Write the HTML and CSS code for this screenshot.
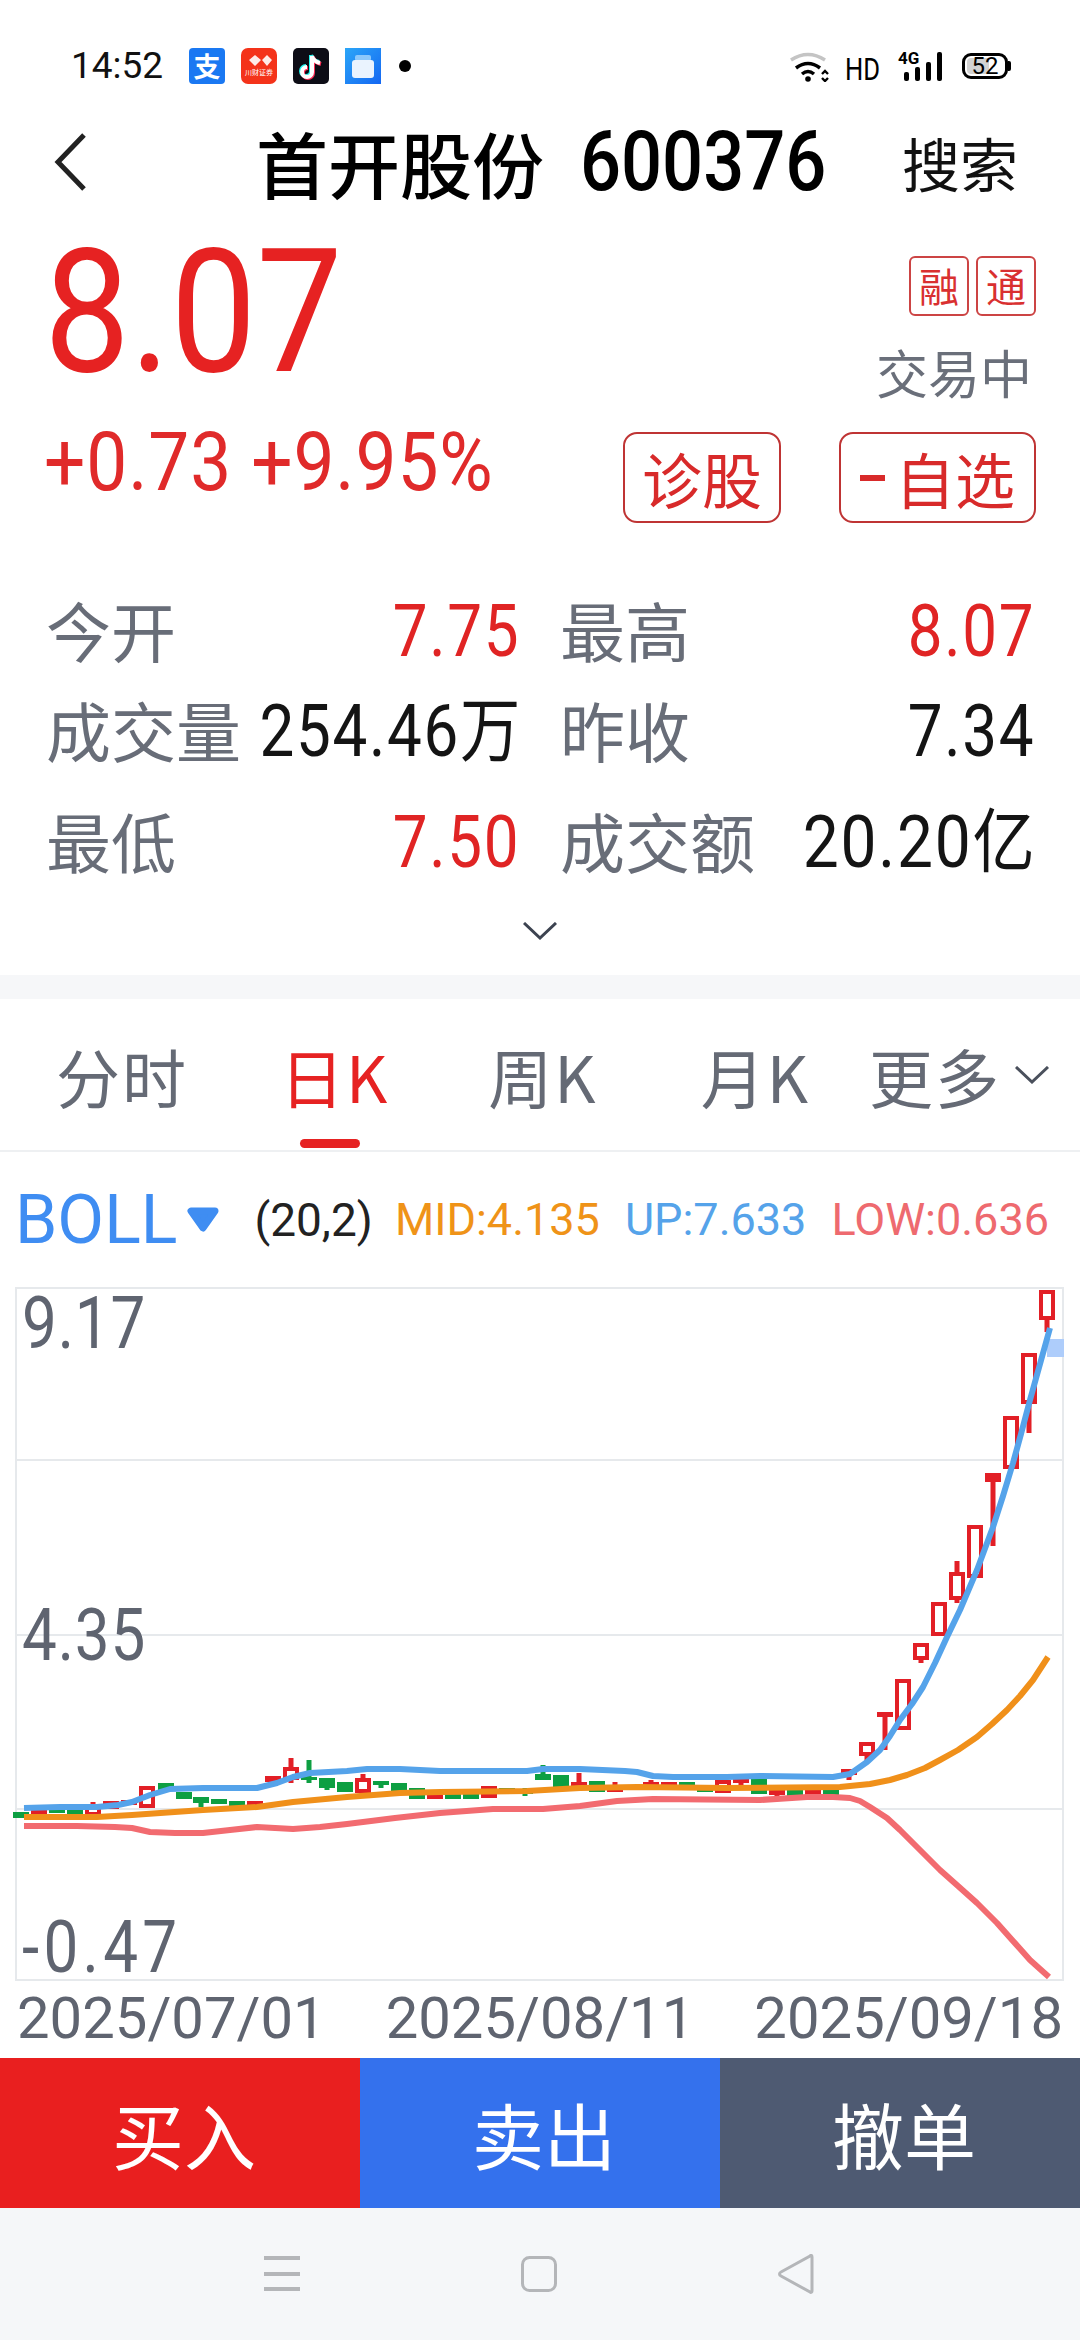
FILE: index.html
```html
<!doctype html>
<html lang="zh-CN">
  <head>
    <meta charset="UTF-8">
    <meta name="viewport" content="width=device-width, initial-scale=1.0">
    <title>首开股份 600376</title>
    <link rel="stylesheet" href="styles.css">
  </head>
  <body>
    <div class="status-bar">
      <span class="clock">14:52</span>
      <span class="app-icon alipay">支</span>
      <svg class="app-icon" viewBox="0 0 36 36">
        <rect width="36" height="36" rx="7" fill="#f4331a"/>
        <path d="M8 12l6-5 6 5-6 6zM21 12l5-5 5 5-5 6z" fill="#fff" opacity=".9"/>
        <text x="18" y="27" font-size="7" fill="#fff" text-anchor="middle" font-family="Noto Sans CJK SC">川财证券</text>
      </svg>
      <svg class="app-icon" viewBox="0 0 36 36">
        <rect width="36" height="36" rx="5" fill="#0d0d16"/>
        <g fill="none" stroke-width="4">
          <path d="M18 7v16a5 5 0 1 1-5-5M18 7c1 4 4 6 8 7" stroke="#25f4ee"/>
          <path d="M20 9v16a5 5 0 1 1-5-5M20 9c1 4 4 6 8 7" stroke="#fe2c55"/>
          <path d="M19 8v16a5 5 0 1 1-5-5M19 8c1 4 4 6 8 7" stroke="#fff"/>
        </g>
      </svg>
      <svg class="app-icon" viewBox="0 0 36 36">
        <defs>
          <linearGradient id="cardBg" x1="0" y1="0" x2="1" y2="1">
            <stop offset="0" stop-color="#2ba6f8"/>
            <stop offset="1" stop-color="#1467f2"/>
          </linearGradient>
        </defs>
        <rect width="36" height="36" fill="url(#cardBg)"/>
        <rect x="10" y="7" width="16" height="6" rx="2" fill="#8cc8fb"/>
        <rect x="7" y="12" width="22" height="18" rx="3" fill="#eaf3fe"/>
      </svg>
      <span class="dot"></span>
      <span class="status-right">
        <svg class="wifi" viewBox="0 0 40 30" fill="none">
          <path d="M1 8Q18-3 35 8" stroke="#c4c4c4" stroke-width="3.5"/>
          <path d="M6 16Q18 7 30 16" stroke="#000" stroke-width="3.5"/>
          <path d="M12 22Q18 17 24 22" stroke="#000" stroke-width="3.5"/>
          <circle cx="18" cy="27" r="2.8" fill="#000"/>
          <path d="M32 22l3-3 3 3M32 26l3 3 3-3" stroke="#000" stroke-width="2.4"/>
        </svg>
        <span class="hd">HD</span>
        <span class="signal">
          <span class="four-g">4G</span>
          <svg viewBox="0 0 38 29" width="38" height="29">
            <rect x="0" y="20" width="5" height="9" rx="2"/>
            <rect x="11" y="15" width="5" height="14" rx="2"/>
            <rect x="22" y="10" width="5" height="19" rx="2"/>
            <rect x="33" y="0" width="5" height="29" rx="2"/>
          </svg>
        </span>
        <span class="battery"><span class="battery-level"></span><span class="battery-num">52</span></span>
      </span>
    </div>

    <div class="title-bar">
      <svg class="back" viewBox="0 0 32 58" fill="none"><path d="M30 2L4 29l26 27" stroke="#222" stroke-width="5"/></svg>
      <div class="title"><span class="name">首开股份</span><span class="code">600376</span></div>
      <span class="search">搜索</span>
    </div>

    <div class="quote">
      <div class="quote-left">
        <div class="price">8.07</div>
        <div class="change">+0.73 +9.95%</div>
      </div>
      <div class="quote-right">
        <div class="tags"><span class="tag">融</span><span class="tag">通</span></div>
        <div class="trade-state">交易中</div>
        <div class="actions">
          <span class="btn btn-diag">诊股</span>
          <span class="btn btn-fav"><i class="minus"></i>自选</span>
        </div>
      </div>
    </div>

    <div class="stats">
      <div class="stat"><span class="k">今开</span><span class="v up">7.75</span></div>
      <div class="stat"><span class="k">最高</span><span class="v up">8.07</span></div>
      <div class="stat"><span class="k">成交量</span><span class="v">254.46<small>万</small></span></div>
      <div class="stat"><span class="k">昨收</span><span class="v">7.34</span></div>
      <div class="stat"><span class="k">最低</span><span class="v up">7.50</span></div>
      <div class="stat"><span class="k">成交额</span><span class="v amount">20.20<small>亿</small></span></div>
    </div>
    <div class="expand">
      <svg viewBox="0 0 34 18" width="34" height="18" fill="none"><path d="M1 1l16 15L33 1" stroke="#3c4350" stroke-width="3"/></svg>
    </div>
    <div class="band"></div>

    <div class="tabs">
      <span class="tab">分时</span>
      <span class="tab active">日K</span>
      <span class="tab week">周K</span>
      <span class="tab month">月K</span>
      <span class="tab more">更多<svg viewBox="0 0 34 18" width="34" height="18" fill="none"><path d="M1 1l16 15L33 1" stroke="#4a505c" stroke-width="3"/></svg></span>
    </div>

    <div class="indicator">
      <span class="boll">BOLL</span>
      <svg class="boll-arrow" viewBox="0 0 32 25"><path d="M4 4H28L16 21z" fill="#3f8df2" stroke="#3f8df2" stroke-width="7" stroke-linejoin="round"/></svg>
      <span class="param">(20,2)</span>
      <span class="mid">MID:4.135</span>
      <span class="upper">UP:7.633</span>
      <span class="lower">LOW:0.636</span>
    </div>

    <div class="chart">
      <svg class="plot" viewBox="0 1287 1080 696">
        <path class="grid" d="M16 1287V1981M1063 1287V1981M16 1288H1063M16 1460H1063M16 1635H1063M16 1809H1063M16 1980H1063"/>
        <rect x="1047" y="1339" width="17" height="18" fill="#aecdfb"/>

        <path class="wick-g" d="M201 1797V1807M309 1760V1783M327 1778V1790M381 1781V1788M525 1788V1796M543 1765V1780"/>
        <path class="wick-r" d="M93 1802V1816M291 1758V1783M363 1774V1791M579 1773V1786M615 1782V1792M651 1780V1788M741 1779V1785M777 1790V1798M849 1769V1780M867 1754V1761M885 1712V1750M921 1658V1663M957 1561V1603M993 1473V1546M1029 1402V1433M1047 1318V1332"/>

        <g class="fall">
          <rect x="13" y="1812" width="16" height="6"/><rect x="49" y="1808" width="16" height="5"/><rect x="67" y="1808" width="16" height="6"/>
          <rect x="158" y="1783" width="16" height="8"/><rect x="176" y="1792" width="16" height="7"/><rect x="193" y="1797" width="16" height="6"/>
          <rect x="211" y="1799" width="16" height="5"/><rect x="229" y="1801" width="16" height="6"/><rect x="301" y="1777" width="16" height="3"/>
          <rect x="319" y="1778" width="16" height="10"/><rect x="337" y="1782" width="16" height="10"/><rect x="373" y="1781" width="16" height="4"/>
          <rect x="391" y="1783" width="16" height="9"/><rect x="409" y="1788" width="16" height="11"/><rect x="445" y="1793" width="16" height="6"/>
          <rect x="463" y="1793" width="16" height="6"/><rect x="499" y="1788" width="16" height="5"/><rect x="517" y="1792" width="16" height="2"/>
          <rect x="535" y="1774" width="16" height="6"/><rect x="553" y="1775" width="16" height="12"/><rect x="589" y="1781" width="16" height="11"/>
          <rect x="679" y="1782" width="16" height="6"/><rect x="697" y="1785" width="16" height="7"/><rect x="751" y="1779" width="16" height="15"/>
          <rect x="787" y="1790" width="16" height="6"/><rect x="823" y="1789" width="16" height="6"/>
        </g>
        <g class="rise">
          <rect x="31" y="1808" width="16" height="7"/><rect x="103" y="1801" width="16" height="8"/><rect x="121" y="1800" width="16" height="5"/>
          <rect x="247" y="1801" width="16" height="5"/><rect x="265" y="1776" width="16" height="6"/><rect x="427" y="1794" width="16" height="5"/>
          <rect x="481" y="1786" width="16" height="12"/><rect x="571" y="1782" width="16" height="4"/><rect x="607" y="1788" width="16" height="4"/>
          <rect x="625" y="1785" width="16" height="3"/><rect x="643" y="1782" width="16" height="6"/><rect x="661" y="1782" width="16" height="6"/>
          <rect x="733" y="1779" width="16" height="4"/><rect x="769" y="1790" width="16" height="5"/><rect x="805" y="1789" width="16" height="6"/>
          <rect x="841" y="1769" width="16" height="6"/><rect x="877" y="1712" width="16" height="5"/><rect x="985" y="1473" width="16" height="9"/>
        </g>
        <g class="hollow">
          <rect x="87" y="1807" width="12" height="7"/><rect x="141" y="1788" width="12" height="18"/><rect x="285" y="1769" width="12" height="9"/>
          <rect x="357" y="1780" width="12" height="11"/><rect x="717" y="1782" width="12" height="9"/><rect x="861" y="1744" width="12" height="10"/>
          <rect x="897" y="1681" width="12" height="47"/><rect x="915" y="1645" width="12" height="13"/><rect x="933" y="1604" width="12" height="30"/>
          <rect x="951" y="1574" width="12" height="24"/><rect x="969" y="1527" width="12" height="49"/><rect x="1005" y="1418" width="12" height="49"/>
          <rect x="1023" y="1355" width="12" height="47"/><rect x="1041" y="1292" width="12" height="26"/>
        </g>

        <polyline class="line low" points="24,1826 77,1826 115,1827 132,1828 150,1832 175,1833 203,1833 230,1830 257,1827 275,1828 293,1829 320,1827 347,1824 395,1818 440,1813 493,1809 543,1809 580,1806 617,1801 653,1799 760,1800 807,1797 833,1797 850,1798 860,1801 870,1807 887,1818 900,1830 913,1843 940,1870 958,1886 977,1903 997,1923 1013,1941 1030,1960 1040,1969 1049,1977"/>
        <polyline class="line top" points="24,1808 60,1807 97,1807 118,1805 132,1802 150,1795 170,1789 203,1788 257,1788 277,1783 293,1777 310,1773 347,1771 367,1769 400,1769 440,1771 527,1771 543,1769 580,1769 625,1771 637,1772 653,1776 673,1777 727,1777 760,1776 833,1777 850,1774 867,1762 880,1750 890,1736 900,1720 912,1704 923,1687 935,1663 947,1637 960,1610 977,1570 993,1527 1003,1496 1013,1463 1021,1434 1030,1400 1040,1364 1050,1328"/>
        <polyline class="line avg" points="24,1817 97,1817 132,1815 203,1810 257,1807 293,1802 347,1797 400,1793 440,1792 527,1791 580,1788 637,1787 727,1788 840,1787 870,1784 890,1780 907,1775 925,1768 940,1760 958,1750 977,1737 992,1724 1007,1710 1020,1696 1033,1680 1048,1657"/>
      </svg>
      <div class="axis">
        <span>9.17</span>
        <span>4.35</span>
        <span class="neg">-0.47</span>
      </div>
    </div>

    <div class="dates">
      <span>2025/07/01</span>
      <span>2025/08/11</span>
      <span>2025/09/18</span>
    </div>

    <div class="trade">
      <span class="trade-btn buy">买入</span>
      <span class="trade-btn sell">卖出</span>
      <span class="trade-btn cancel">撤单</span>
    </div>

    <div class="nav-bar">
      <svg viewBox="0 0 36 36" width="36" height="36"><path d="M0 2H36M0 18H36M0 33H36" stroke="#b4b6b9" stroke-width="4"/></svg>
      <svg viewBox="0 0 36 36" width="36" height="36" fill="none"><rect x="1.5" y="1.5" width="33" height="33" rx="7" stroke="#b4b6b9" stroke-width="3"/></svg>
      <svg viewBox="0 0 36 40" width="36" height="40" fill="none"><path d="M34 3c0-2-1-2-2-1L3 18c-2 1-2 3 0 4l29 16c1 1 2 0 2-1z" stroke="#b4b6b9" stroke-width="3"/></svg>
    </div>
  </body>
</html>
```

FILE: styles.css
```css
* {
  box-sizing: border-box;
}

body {
  margin: 0;
  width: 1080px;
  height: 2340px;
  background: #fff;
  font-family: Roboto, 'Noto Sans CJK SC', sans-serif;
  color: #111;
  overflow: hidden;
  white-space: nowrap;
}

/* status bar */
.status-bar {
  height: 106px;
  padding: 48px 72px 0 71px;
  display: flex;
  align-items: flex-start;
}
.clock {
  font-size: 37px;
  line-height: 36px;
  width: 118px;
  color: #111;
}
.app-icon {
  width: 36px;
  height: 36px;
  margin-right: 16px;
  display: block;
}
.alipay {
  background: #1a78f2;
  border-radius: 4px;
  color: #fff;
  font-family: 'Noto Sans CJK SC', sans-serif;
  font-weight: 700;
  font-size: 27px;
  line-height: 36px;
  text-align: center;
}
.dot {
  width: 12px;
  height: 12px;
  margin: 12px 0 0 2px;
  background: #000;
  border-radius: 50%;
}
.status-right {
  margin-left: auto;
  display: flex;
  align-items: flex-start;
}
.wifi {
  width: 40px;
  height: 30px;
  margin-top: 4px;
}
.hd {
  width: 35px;
  font-size: 32px;
  line-height: 36px;
  margin: 3px 0 0 15px;
  color: #000;
  transform: scaleX(.8);
  transform-origin: left;
}
.signal {
  position: relative;
  display: block;
  width: 38px;
  height: 29px;
  margin: 4px 0 0 24px;
}
.signal svg {
  display: block;
}
.four-g {
  position: absolute;
  left: -6px;
  top: -2px;
  font-size: 17px;
  line-height: 16px;
  font-weight: 700;
  color: #000;
}
.battery {
  position: relative;
  width: 46px;
  height: 26px;
  margin: 5px 0 0 20px;
  border: 3px solid #000;
  border-radius: 9px;
  text-align: center;
}
.battery::after {
  content: '';
  position: absolute;
  right: -6px;
  top: 5px;
  width: 3px;
  height: 10px;
  background: #000;
  border-radius: 0 2px 2px 0;
}
.battery-level {
  position: absolute;
  left: 2px;
  top: 2px;
  bottom: 2px;
  width: 22px;
  background: #d2d2d2;
  border-radius: 4px 0 0 4px;
}
.battery-num {
  position: relative;
  display: block;
  font-size: 24px;
  line-height: 20px;
  color: #000;
}

/* title */
.title-bar {
  height: 112px;
  display: flex;
  align-items: center;
  padding: 0 62px 0 54px;
}
.back {
  width: 32px;
  height: 58px;
}
.title {
  margin-left: 170px;
  display: flex;
  align-items: center;
}
.name {
  font-family: 'Noto Sans CJK SC', sans-serif;
  font-size: 72px;
  font-weight: 500;
  line-height: 112px;
  color: #000;
}
.code {
  width: 239px;
  margin-left: 36px;
  font-size: 84px;
  font-weight: 500;
  line-height: 112px;
  color: #000;
  transform: scaleX(.86);
  transform-origin: left;
}
.search {
  margin-left: auto;
  font-family: 'Noto Sans CJK SC', sans-serif;
  font-size: 58px;
  line-height: 112px;
}

/* quote */
.quote {
  height: 364px;
  padding: 0 44px 0 44px;
  display: flex;
  justify-content: space-between;
}
.price {
  font-size: 173px;
  line-height: 172px;
  margin-top: 8px;
  color: #e62222;
  transform: scaleX(.885);
  transform-origin: left;
}
.change {
  font-size: 82px;
  line-height: 80px;
  margin-top: 24px;
  color: #e02a2a;
  letter-spacing: 1px;
  transform: scaleX(.89);
  transform-origin: left;
}
.quote-right {
  display: flex;
  flex-direction: column;
  align-items: flex-end;
}
.tags {
  display: flex;
  gap: 7px;
  margin-top: 38px;
}
.tag {
  width: 60px;
  height: 60px;
  border: 2px solid #cc4444;
  border-radius: 6px;
  color: #d93030;
  font-family: 'Noto Sans CJK SC', sans-serif;
  font-size: 40px;
  line-height: 54px;
  text-align: center;
}
.trade-state {
  font-family: 'Noto Sans CJK SC', sans-serif;
  font-size: 52px;
  line-height: 60px;
  margin: 26px 4px 0 0;
  color: #6a6f7a;
}
.actions {
  display: flex;
  gap: 58px;
  margin-top: 30px;
}
.btn {
  height: 91px;
  border: 2px solid #bf3434;
  border-radius: 14px;
  color: #d82a2a;
  font-family: 'Noto Sans CJK SC', sans-serif;
  font-size: 60px;
  line-height: 84px;
  text-align: center;
  display: flex;
  align-items: center;
  justify-content: center;
}
.btn-diag {
  width: 158px;
}
.btn-fav {
  width: 197px;
}
.minus {
  width: 25px;
  height: 6px;
  margin-right: 10px;
  background: #d82a2a;
}

/* stats */
.stats {
  padding: 0 45px 0 46px;
  display: grid;
  grid-template-columns: 474px 475px;
  grid-template-rows: 100px 100px 122px;
  column-gap: 40px;
}
.stat {
  display: flex;
  justify-content: space-between;
  align-items: center;
}
.k {
  flex: none;
  margin: 0 -60px 6px 0;
  font-family: 'Noto Sans CJK SC', sans-serif;
  font-size: 65px;
  color: #686d78;
}
.v {
  font-size: 72px;
  line-height: 84px;
  letter-spacing: 2px;
  color: #141414;
  transform: scaleX(.86);
  transform-origin: right;
}
.v small {
  font-family: 'Noto Sans CJK SC', sans-serif;
  font-size: 70px;
  line-height: 0;
  letter-spacing: 0;
}
.v.up {
  color: #e02424;
}
.v.amount {
  transform: scaleX(.89);
}
.expand {
  height: 71px;
  padding-top: 18px;
  display: flex;
  justify-content: center;
  align-items: flex-start;
}
.band {
  height: 24px;
  background: #f6f7f9;
}

/* tabs */
.tabs {
  height: 153px;
  border-bottom: 2px solid #eef0f2;
  padding: 0 32px 0 56px;
  display: flex;
  gap: 94px;
}
.tab {
  position: relative;
  font-family: 'Noto Sans CJK SC', sans-serif;
  font-size: 64px;
  letter-spacing: 2px;
  line-height: 152px;
  color: #656a75;
}
.tab.active {
  margin-left: -2px;
  color: #e62222;
}
.tab.active::after {
  content: '';
  position: absolute;
  left: 20px;
  bottom: 2px;
  width: 60px;
  height: 9px;
  background: #e62222;
  border-radius: 5px;
}
.tab.week {
  margin-left: 5px;
}
.tab.month {
  margin-left: 9px;
}
.tab.more {
  margin-left: -35px;
  display: flex;
  align-items: center;
  gap: 14px;
}

/* indicator */
.indicator {
  height: 135px;
  padding: 0 31px 0 15px;
  display: flex;
  align-items: center;
  font-size: 45px;
}
.boll {
  font-size: 68px;
  color: #3f8df2;
}
.boll-arrow {
  width: 32px;
  height: 25px;
  margin: 0 35px 0 10px;
}
.param {
  font-size: 46px;
  color: #222;
}
.mid {
  margin-left: auto;
  color: #ef9318;
}
.upper {
  margin-left: 25px;
  color: #55a3ea;
}
.lower {
  margin-left: 25px;
  color: #ee6a6f;
}

/* chart */
.chart {
  position: relative;
  height: 696px;
}
.plot {
  display: block;
  width: 1080px;
  height: 696px;
}
.grid {
  fill: none;
  stroke: #e6e9ec;
  stroke-width: 2;
}
.wick-g {
  fill: none;
  stroke: #0d9f42;
  stroke-width: 5;
}
.wick-r {
  fill: none;
  stroke: #e21f26;
  stroke-width: 5;
}
.fall {
  fill: #0d9f42;
}
.rise {
  fill: #e21f26;
}
.hollow {
  fill: #fff;
  stroke: #e21f26;
  stroke-width: 4;
}
.line {
  fill: none;
  stroke-width: 6;
  stroke-linejoin: round;
}
.line.top {
  stroke: #55a3ea;
}
.line.avg {
  stroke: #f0901a;
}
.line.low {
  stroke: #f26b70;
}
.axis {
  position: absolute;
  left: 22px;
  top: -5px;
  bottom: -7px;
  display: flex;
  flex-direction: column;
  justify-content: space-between;
  align-items: flex-start;
  font-size: 72px;
  line-height: 84px;
  letter-spacing: 1px;
  color: #5f6470;
  transform: scaleX(.86);
  transform-origin: left;
}
.axis .neg {
  letter-spacing: 5px;
}

/* dates */
.dates {
  height: 75px;
  padding: 0 17px;
  display: flex;
  justify-content: space-between;
  font-size: 58px;
  line-height: 70px;
  color: #5f6470;
}

/* buttons */
.trade {
  height: 150px;
  display: grid;
  grid-template-columns: 360px 360px 360px;
}
.trade-btn {
  padding-left: 8px;
  font-family: 'Noto Sans CJK SC', sans-serif;
  font-size: 72px;
  line-height: 150px;
  text-align: center;
  color: #fff;
}
.buy {
  background: #e91f1f;
}
.sell {
  background: #3471ed;
}
.cancel {
  background: #4e5a72;
}

.nav-bar {
  height: 132px;
  background: #f5f7f9;
  padding-left: 264px;
  display: flex;
  align-items: center;
  gap: 221px;
}
```
